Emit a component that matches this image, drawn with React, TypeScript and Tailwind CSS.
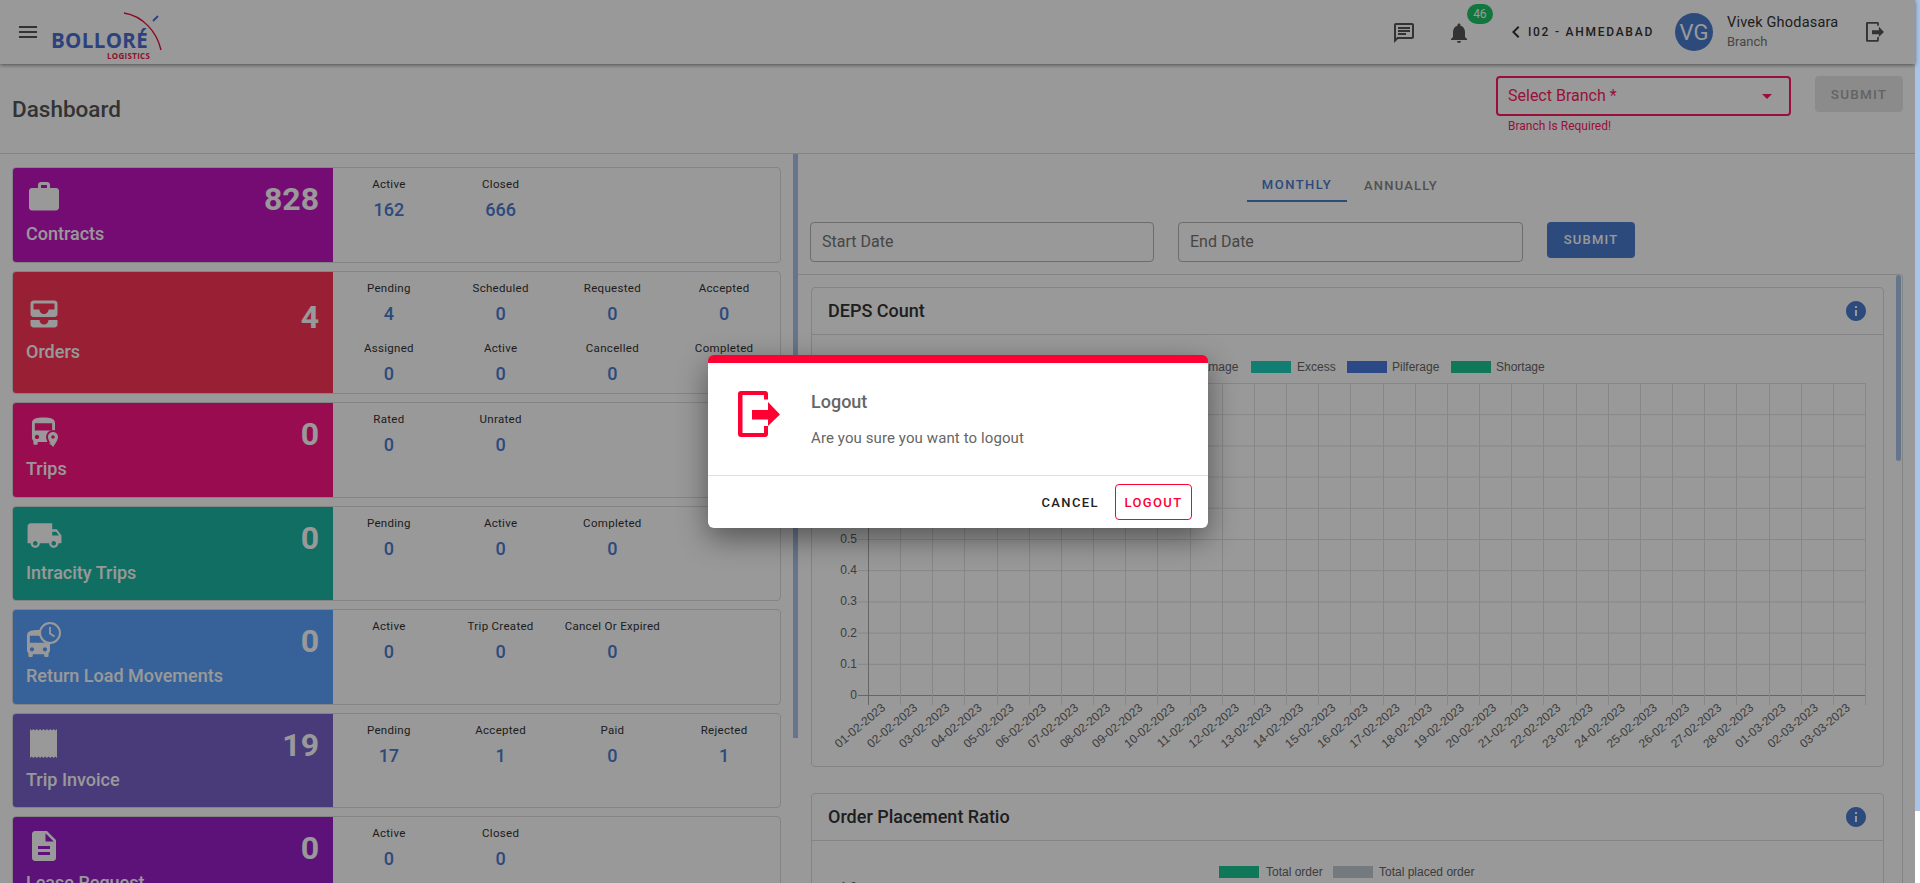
import React from "react";
import {
  MdMenu,
  MdOutlineChat,
  MdNotifications,
  MdChevronLeft,
  MdArrowDropDown,
  MdWork,
  MdAllInbox,
  MdLocalShipping,
  MdDescription,
  MdInfo,
} from "react-icons/md";

const BUS =
  "M4 16c0 .88.39 1.67 1 2.22V20c0 .55.45 1 1 1h1c.55 0 1-.45 1-1v-1h8v1c0 .55.45 1 1 1h1c.55 0 1-.45 1-1v-1.78c.61-.55 1-1.34 1-2.22V6c0-3.5-3.58-4-8-4s-8 .5-8 4v10zm3.5 1c-.83 0-1.5-.67-1.5-1.5S6.67 14 7.5 14s1.5.67 1.5 1.5S8.33 17 7.5 17zm9 0c-.83 0-1.5-.67-1.5-1.5s.67-1.5 1.5-1.5 1.5.67 1.5 1.5-.67 1.5-1.5 1.5zm1.5-6H6V6h12v5z";

const BusPinIcon = ({ bg }: { bg: string }) => (
  <svg width="36" height="36" viewBox="0 0 36 36" fill="white">
    <g transform="translate(0.2,0.6) scale(1.44)">
      <path d={BUS} />
    </g>
    <circle cx="27" cy="23" r="7" fill={bg} />
    <path d="M27 34.500l-6-8v4z" fill={bg} />
    <path d="M27 18c-2.800 0-5 2.200-5 5 0 3.600 5 10 5 10s5-6.400 5-10c0-2.800-2.200-5-5-5zm0 6.800a1.800 1.800 0 1 1 0-3.600 1.800 1.800 0 0 1 0 3.600z" />
  </svg>
);

const BusClockIcon = ({ bg }: { bg: string }) => (
  <svg width="36" height="36" viewBox="0 0 36 36" fill="white">
    <g transform="translate(-4.800,6) scale(1.44)">
      <path d={BUS} />
    </g>
    <circle cx="24" cy="12" r="10" fill={bg} stroke="white" strokeWidth="2" />
    <path d="M24 6v6.500l4.500 3" fill="none" stroke="white" strokeWidth="1.800" />
  </svg>
);

const ReceiptIcon = () => {
  // serrated top and bottom edge of the slip
  const teeth = Array.from({ length: 8 }, (_, i) => 4 + (i * 27) / 8);
  const step = 27 / 8;
  const d =
    "M4 5" +
    teeth.map((x) => `L${x + step / 2} 6.500L${x + step} 5`).join("") +
    "V34" +
    [...teeth].reverse().map((x) => `L${x + step / 2} 32.500L${x} 34`).join("") +
    "Z";
  return (
    <svg width="36" height="36" viewBox="0 0 36 36" fill="white">
      <path d={d} />
    </svg>
  );
};

const ExitIcon = ({ size, color }: { size: number; color: string }) => (
  <svg width={size} height={(size * 46) / 42} viewBox="0 0 42 46" fill={color}>
    <path d="M3 0h24a3 3 0 0 1 3 3v5.500h-4V4H4.500v38H26v-7h4v8a3 3 0 0 1-3 3H3a3 3 0 0 1-3-3V3a3 3 0 0 1 3-3z" />
    <path d="M14 19h16v-8l12 12.500L30 35v-6.500H14z" />
  </svg>
);

type Stat = { label: string; value: number };
type Card = {
  title: string;
  total: number;
  bg: string;
  height: string;
  icon: React.ReactNode;
  stats: Stat[];
};

const cards: Card[] = [
  {
    title: "Contracts",
    total: 828,
    bg: "bg-[#c414c1]",
    height: "h-[96px]",
    icon: <MdWork size={36} />,
    stats: [
      { label: "Active", value: 162 },
      { label: "Closed", value: 666 },
    ],
  },
  {
    title: "Orders",
    total: 4,
    bg: "bg-[#fd3558]",
    height: "h-[123px]",
    icon: <MdAllInbox size={36} />,
    stats: [
      { label: "Pending", value: 4 },
      { label: "Scheduled", value: 0 },
      { label: "Requested", value: 0 },
      { label: "Accepted", value: 0 },
      { label: "Assigned", value: 0 },
      { label: "Active", value: 0 },
      { label: "Cancelled", value: 0 },
      { label: "Completed", value: 0 },
    ],
  },
  {
    title: "Trips",
    total: 0,
    bg: "bg-[#ff1685]",
    height: "h-[96px]",
    icon: <BusPinIcon bg="#ff1685" />,
    stats: [
      { label: "Rated", value: 0 },
      { label: "Unrated", value: 0 },
    ],
  },
  {
    title: "Intracity Trips",
    total: 0,
    bg: "bg-[#1cb7a3]",
    height: "h-[95px]",
    icon: <MdLocalShipping size={37} />,
    stats: [
      { label: "Pending", value: 0 },
      { label: "Active", value: 0 },
      { label: "Completed", value: 0 },
    ],
  },
  {
    title: "Return Load Movements",
    total: 0,
    bg: "bg-[#5da3ff]",
    height: "h-[96px]",
    icon: <BusClockIcon bg="#5da3ff" />,
    stats: [
      { label: "Active", value: 0 },
      { label: "Trip Created", value: 0 },
      { label: "Cancel Or Expired", value: 0 },
    ],
  },
  {
    title: "Trip Invoice",
    total: 19,
    bg: "bg-[#7b61cb]",
    height: "h-[95px]",
    icon: <ReceiptIcon />,
    stats: [
      { label: "Pending", value: 17 },
      { label: "Accepted", value: 1 },
      { label: "Paid", value: 0 },
      { label: "Rejected", value: 1 },
    ],
  },
  {
    title: "Lease Request",
    total: 0,
    bg: "bg-[#991ec8]",
    height: "h-[96px]",
    icon: <MdDescription size={36} />,
    stats: [
      { label: "Active", value: 0 },
      { label: "Closed", value: 0 },
    ],
  },
];

const StatCard = ({ card }: { card: Card }) => (
  <div
    className={`flex shrink-0 ${card.height} rounded border border-[#dcdcdc] overflow-hidden`}
  >
    <div
      className={`w-[320px] shrink-0 ${card.bg} text-white pl-[13px] pr-[14px] pb-[3px] flex flex-col justify-center`}
    >
      <div className="flex items-center justify-between h-[36px]">
        <span className="-mt-[5px]">{card.icon}</span>
        <span className="text-[32px] font-bold">{card.total}</span>
      </div>
      <div className="mt-[5px] text-[18px] leading-[24px] font-medium">
        {card.title}
      </div>
    </div>
    <div className="flex-1 grid grid-cols-4 auto-rows-[60px] pt-[6px]">
      {card.stats.map((s, i) => (
        <div key={i} className="flex flex-col items-center">
          <span className="text-[11.5px] leading-[20px] tracking-[0.3px] text-[#333]">
            {s.label}
          </span>
          <span className="text-[18px] leading-[26px] mt-[3px] font-medium text-[#4c7cd0]">
            {s.value}
          </span>
        </div>
      ))}
    </div>
  </div>
);

const dates = [
  ...Array.from({ length: 28 }, (_, i) => `${String(i + 1).padStart(2, "0")}-02-2023`),
  "01-03-2023",
  "02-03-2023",
  "03-03-2023",
];

const CHART_L = 56;
const CHART_R = 1053;

const DepsChart = () => {
  const top = 48;
  const base = 360;
  const col = (CHART_R - CHART_L) / 31;
  const row = (base - top) / 10;
  return (
    <svg width="1071" height="432" className="block" fontFamily="'Liberation Sans', sans-serif">
      <text x="381" y="36" fontSize="12" fill="#666">Damage</text>
      <rect x="439" y="26" width="40" height="12" fill="#1fd1bd" />
      <text x="485" y="36" fontSize="12" fill="#666">Excess</text>
      <rect x="535" y="26" width="40" height="12" fill="#4a7be0" />
      <text x="580" y="36" fontSize="12" fill="#666">Pilferage</text>
      <rect x="639" y="26" width="40" height="12" fill="#1bc794" />
      <text x="684" y="36" fontSize="12" fill="#666">Shortage</text>
      {Array.from({ length: 11 }, (_, i) => (
        <g key={i}>
          <line
            x1={CHART_L - 10}
            x2={CHART_R}
            y1={base - i * row + 0.5}
            y2={base - i * row + 0.5}
            stroke={i === 0 ? "#aaa" : "#e2e2e2"}
          />
          <text x={CHART_L - 11} y={base - i * row + 4} fontSize="12" fill="#666" textAnchor="end">
            {i === 0 ? "0" : i === 10 ? "1.0" : (i / 10).toFixed(1)}
          </text>
        </g>
      ))}
      {dates.map((d, i) => {
        const x = CHART_L + col * i + col / 2 + 2;
        return (
          <text
            key={d}
            x={x}
            y={base + 14}
            fontSize="12"
            fill="#666"
            textAnchor="end"
            transform={`rotate(-40 ${x} ${base + 14})`}
          >
            {d}
          </text>
        );
      })}
      {Array.from({ length: 32 }, (_, i) => (
        <line
          key={i}
          x1={Math.round(CHART_L + col * i) + 0.5}
          x2={Math.round(CHART_L + col * i) + 0.5}
          y1={top}
          y2={base + 10}
          stroke={i === 0 ? "#aaa" : "#e2e2e2"}
        />
      ))}
    </svg>
  );
};

const OrderChart = () => (
  <svg width="1071" height="60" className="block" fontFamily="'Liberation Sans', sans-serif">
    <rect x="407" y="25" width="40" height="12" fill="#1bc794" />
    <text x="454" y="35" fontSize="12" fill="#666">Total order</text>
    <rect x="521" y="25" width="40" height="12" fill="#c3ccd3" />
    <text x="567" y="35" fontSize="12" fill="#666">Total placed order</text>
    <text x="45" y="50" fontSize="12" fill="#666" textAnchor="end">1.0</text>
  </svg>
);

const ChartCard = ({ title, body, height }: { title: string; body: React.ReactNode; height: string }) => (
  <div className={`w-[1073px] shrink-0 ${height} rounded border border-[#dcdcdc]`}>
    <div className="h-[47px] pl-[16px] pr-[15px] flex items-center justify-between border-b border-[#dcdcdc]">
      <span className="text-[18px] -mt-[1px] font-medium text-[#333]">{title}</span>
      <MdInfo size={24} className="text-[#4c7cd0]" />
    </div>
    {body}
  </div>
);

const Logo = () => (
  <div className="relative w-[112px] h-[50px] mt-[6px] ml-[11px]">
    <span className="absolute left-0 top-[18px] text-[20.5px] leading-[24px] font-bold text-[#4c6fd0] font-['Open_Sans',sans-serif] tracking-[0.35px]">
      BOLLORÉ
    </span>
    <span className="absolute left-[56px] top-[41px] text-[8px] leading-[9px] font-bold text-[#f0204a] tracking-[0.3px] font-['Open_Sans',sans-serif]">
      LOGISTICS
    </span>
    <svg width="112" height="50" className="absolute left-0 top-0" fill="none">
      <path d="M73 3C92 6 106 22 110 40" stroke="#e8103c" strokeWidth="1.400" />
      <path d="M102 11l5-5M89 25l3-4" stroke="#4c6fd0" strokeWidth="1.800" />
    </svg>
  </div>
);

export default function App() {
  return (
    <div className="relative w-full h-[883px] overflow-hidden flex bg-white font-['Roboto',sans-serif]">
      <div className="w-[1915px] shrink-0 flex flex-col">
        <header className="relative z-10 h-16 shrink-0 bg-white shadow-[0_1px_4px_rgba(0,0,0,0.5)] flex items-center">
          <MdMenu size={24} className="ml-[16px] text-[#555]" />
          <Logo />
          <div className="ml-auto flex items-center">
            <MdOutlineChat size={24} className="text-[#555] mr-[31px] mt-[1px]" />
            <div className="relative mr-[33px]">
              <MdNotifications size={24} className="text-[#555] mt-[1px]" />
              <span className="absolute left-[20px] -top-[16px] w-[26px] h-[20px] rounded-full bg-[#1fc76a] text-white text-[12px] leading-[20px] text-center">
                46
              </span>
            </div>
            <MdChevronLeft size={24} className="text-[#333] -mr-[5px]" />
            <span className="ml-[5px] text-[12px] font-medium tracking-[1.75px] text-[#333]">
              I02 - AHMEDABAD
            </span>
            <div className="ml-[21px] w-[38px] h-[38px] rounded-full bg-[#4c7cd0] text-white text-[22px] flex items-center justify-center">
              VG
            </div>
            <div className="ml-[14px] w-[139px] flex flex-col">
              <span className="text-[14.5px] leading-[20px] tracking-[0.2px] text-[#333]">Vivek Ghodasara</span>
              <span className="text-[13px] leading-[18px] text-[#777]">Branch</span>
            </div>
            <span className="mr-[31px]">
              <ExitIcon size={18} color="#555" />
            </span>
          </div>
        </header>

        <div className="h-[90px] shrink-0 border-b border-[#dcdcdc] flex items-start pl-[12px] pr-[12px]">
          <h1 className="mt-[30px] text-[22.5px] leading-[30px] font-medium text-[#555]">Dashboard</h1>
          <div className="ml-auto mt-[12px] w-[295px]">
            <div className="h-[40px] rounded border-2 border-[#ff1a60] flex items-center justify-between pl-[10px] pr-[10px] text-[16px] text-[#ff1a60]">
              <span>Select Branch *</span>
              <MdArrowDropDown size={24} />
            </div>
            <div className="ml-[12px] mt-[2px] text-[12px] leading-[16px] text-[#ff1a60]">Branch Is Required!</div>
          </div>
          <div className="ml-[24px] mt-[12px] w-[88px] h-[36px] rounded bg-[#e8e8e8] text-[#a6a6a6] text-[13.500px] font-medium tracking-[1.2px] flex items-center justify-center">
            SUBMIT
          </div>
        </div>

        <div className="flex-1 flex min-h-0">
          <div className="w-[798px] shrink-0 flex items-start">
            <div className="w-[793px] shrink-0 pl-[12px] pr-[12px] pt-[13px] flex flex-col gap-[8px]">
              {cards.map((c) => (
                <StatCard key={c.title} card={c} />
              ))}
            </div>
            <div className="w-[5px] h-[584px] bg-[#a8c4e8]" />
          </div>

          <div className="flex-1 min-w-0 flex flex-col">
            <div className="h-[48px] shrink-0 flex pl-[449px]">
              <div className="h-[48px] w-[100px] border-b-2 border-[#4c7cd0] text-[#4c7cd0] text-[13px] font-medium tracking-[1.5px] pt-[15px] flex items-center justify-center">
                MONTHLY
              </div>
              <div className="h-[48px] w-[92px] ml-[8px] text-[#888] text-[13px] font-medium tracking-[1.2px] pt-[15px] flex items-center justify-center">
                ANNUALLY
              </div>
            </div>
            <div className="h-[72px] shrink-0 pt-[20px] pl-[12px] flex items-start">
              <div className="w-[344px] h-[40px] rounded border border-[#b4b4b4] pl-[11px] flex items-center text-[16px] text-[#757575]">
                Start Date
              </div>
              <div className="ml-[24px] w-[345px] h-[40px] rounded border border-[#b4b4b4] pl-[11px] flex items-center text-[16px] text-[#757575]">
                End Date
              </div>
              <div className="ml-[24px] w-[88px] h-[36px] rounded bg-[#4c7cd0] text-white text-[13px] font-medium tracking-[1.200px] flex items-center justify-center">
                SUBMIT
              </div>
            </div>
            <div className="flex-1 min-h-0 w-[1105px] border-t border-r border-[#dcdcdc] rounded-tr flex overflow-hidden">
              <div className="w-[1098px] shrink-0 pl-[13px] pt-[12px] flex flex-col gap-[26px]">
                <ChartCard title="DEPS Count" height="h-[480px]" body={<DepsChart />} />
                <ChartCard title="Order Placement Ratio" height="h-[200px]" body={<OrderChart />} />
              </div>
              <div className="w-[5px] h-[186px] bg-[#a8c4e8] rounded-full" />
            </div>
          </div>
        </div>
      </div>

      <div className="absolute z-20 top-0 bottom-0 left-0 w-[1915px] bg-black/40 flex items-start justify-center pl-[1px]">
        <div className="mt-[355px] w-[500px] h-[173px] bg-white rounded-md overflow-hidden border-t-8 border-[#ff0033] shadow-[0_10px_30px_rgba(0,0,0,0.45)] flex flex-col">
          <div className="h-[112px] shrink-0 flex items-start pl-[30px]">
            <span className="mt-[28px]">
              <ExitIcon size={42} color="#ff0033" />
            </span>
            <div className="ml-[31px] mt-[27px]">
              <div className="text-[18px] leading-[24px] font-medium text-[#666]">Logout</div>
              <div className="mt-[13px] text-[15px] leading-[22px] tracking-[0.1px] text-[#666]">
                Are you sure you want to logout
              </div>
            </div>
          </div>
          <div className="flex-1 border-t border-[#e0e0e0] flex items-start justify-end pr-[16px] pt-[8px]">
            <span className="h-[36px] pt-[1px] flex items-center text-[13px] font-medium tracking-[1.4px] text-[#222] mr-[16px]">
              CANCEL
            </span>
            <span className="w-[77px] h-[36px] pt-[1px] rounded border border-[#ff0033] flex items-center justify-center text-[13px] font-medium tracking-[1.4px] text-[#ff0033]">
              LOGOUT
            </span>
          </div>
        </div>
      </div>

      <div className="w-[5px] shrink-0 bg-white">
        <div className="h-[811px] bg-[#a8c4e8]" />
      </div>
    </div>
  );
}
